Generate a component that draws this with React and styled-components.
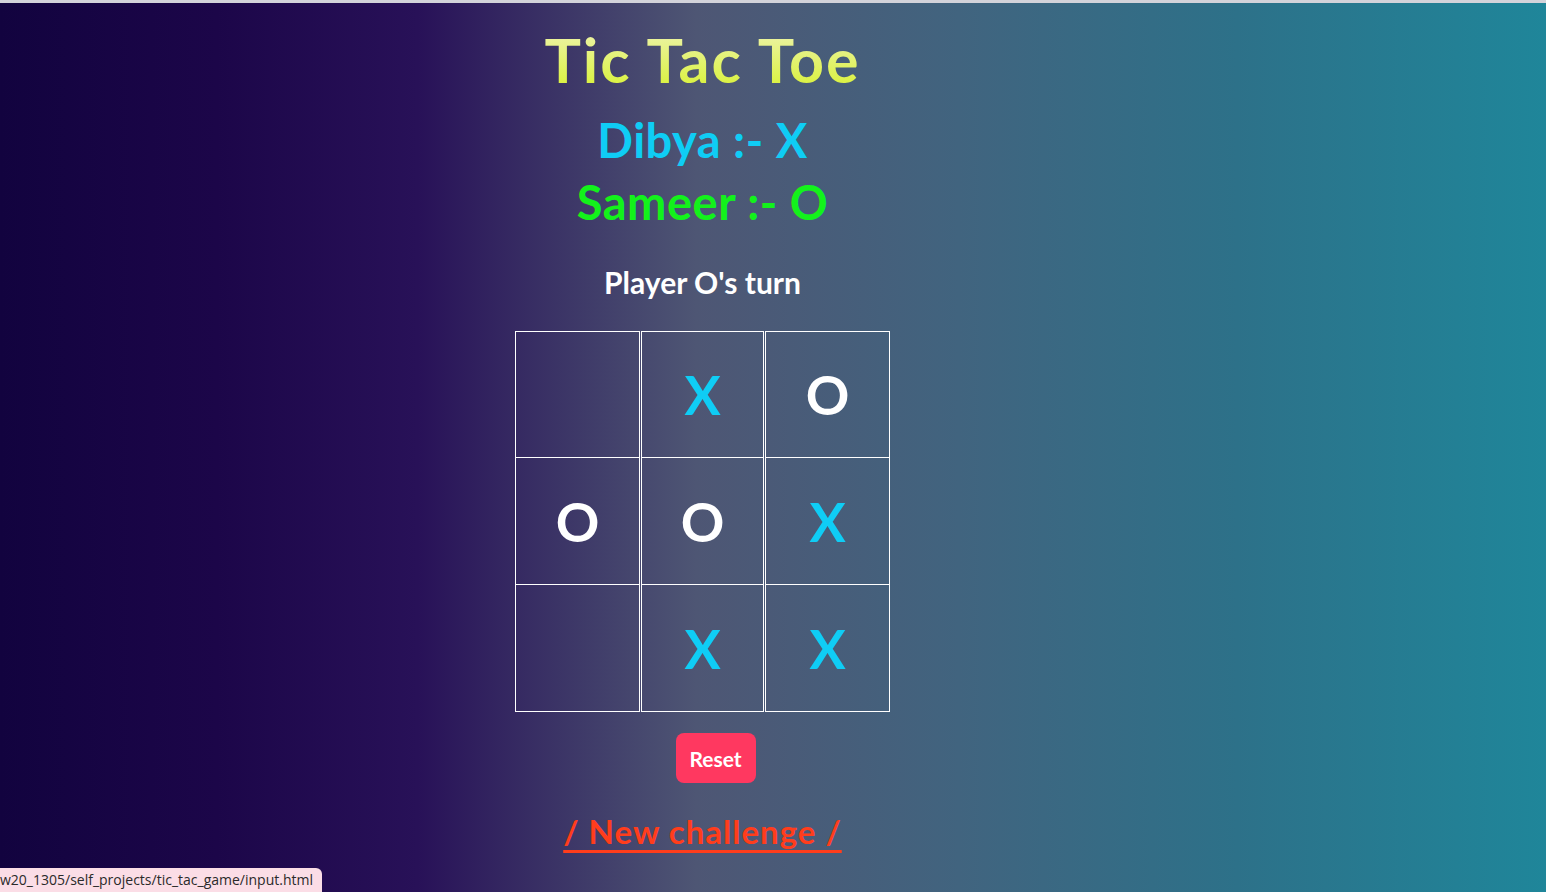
import React from 'react';
import styled, { createGlobalStyle } from 'styled-components';

const GlobalStyle = createGlobalStyle`
  html, body {
    margin: 0;
    padding: 0;
    height: 100%;
  }
  body {
    font-family: "Lato", "Noto Sans", sans-serif;
    overflow: hidden;
  }
`;

const Page = styled.div`
  width: 1546px;
  height: 892px;
  box-sizing: border-box;
  border-top: 3px solid #d3d3da;
  background: linear-gradient(to right, #12033f 0%, #1c0649 14%, #281158 27%, #4e5674 45%, #41647f 62%, #2d7189 80%, #1f869a 100%);
  position: relative;
`;

const Column = styled.main`
  width: 1405px;
  display: flex;
  flex-direction: column;
  align-items: center;
`;

const Title = styled.h1`
  margin: 23px 0 0;
  font-size: 61px;
  font-weight: 700;
  line-height: 68px;
  letter-spacing: 2px;
  background: linear-gradient(to bottom, #eef3b2, #d8f230);
  -webkit-background-clip: text;
  background-clip: text;
  color: transparent;
`;

const PlayerName = styled.h2`
  margin: ${p => p.$top}px 0 0;
  font-size: 47px;
  font-weight: 700;
  line-height: 56px;
  letter-spacing: 0.5px;
  color: ${p => p.$color};
`;

const Turn = styled.p`
  margin: 34px 0 0;
  font-size: 30px;
  font-weight: 700;
  line-height: 36px;
  color: #ffffff;
`;

const Board = styled.div`
  margin-top: 31px;
  display: grid;
  grid-template-columns: 125px 123px 125px;
  column-gap: 1px;
`;

const Cell = styled.div`
  box-sizing: border-box;
  height: 127px;
  border: 1px solid #ffffff;
  border-top: ${p => (p.$first ? '1px solid #ffffff' : 'none')};
  display: flex;
  align-items: center;
  justify-content: center;
  font-size: 54px;
  font-weight: 700;
  color: ${p => (p.$mark === 'X' ? '#0fcdf5' : '#ffffff')};
`;

const ResetButton = styled.button`
  margin: 21px 0 0 26px;
  width: 80px;
  height: 50px;
  border: none;
  border-radius: 8px;
  background: #ff3860;
  color: #ffffff;
  font-family: "Lato", "Noto Sans", sans-serif;
  font-size: 21px;
  font-weight: 700;
`;

const ChallengeLink = styled.a`
  margin-top: 28px;
  font-size: 33px;
  font-weight: 700;
  letter-spacing: 1px;
  color: #ff3d1c;
  text-decoration: underline;
  text-decoration-thickness: 3px;
  text-underline-offset: 6px;
`;

const StatusBar = styled.div`
  position: absolute;
  left: 0;
  bottom: 0;
  height: 24px;
  padding: 0 9px 0 0;
  background: #fbdde6;
  border-top-right-radius: 6px;
  font-family: "Open Sans", "Noto Sans", sans-serif;
  font-size: 14px;
  line-height: 24px;
  color: #2a2a2a;
  white-space: nowrap;
`;

const board = ['', 'X', 'O', 'O', 'O', 'X', '', 'X', 'X'];

export default function App() {
  return (
    <>
      <GlobalStyle />
      <Page>
        <Column>
          <Title>Tic Tac Toe</Title>
          <PlayerName $top={18} $color="#0fcdf5">Dibya :- X</PlayerName>
          <PlayerName $top={6} $color="#13f21b">Sameer :- O</PlayerName>
          <Turn>Player O's turn</Turn>
          <Board>
            {board.map((mark, i) => (
              <Cell key={i} $mark={mark} $first={i < 3}>
                {mark}
              </Cell>
            ))}
          </Board>
          <ResetButton>Reset</ResetButton>
          <ChallengeLink href="#">/ New challenge /</ChallengeLink>
        </Column>
        <StatusBar>w20_1305/self_projects/tic_tac_game/input.html</StatusBar>
      </Page>
    </>
  );
}
